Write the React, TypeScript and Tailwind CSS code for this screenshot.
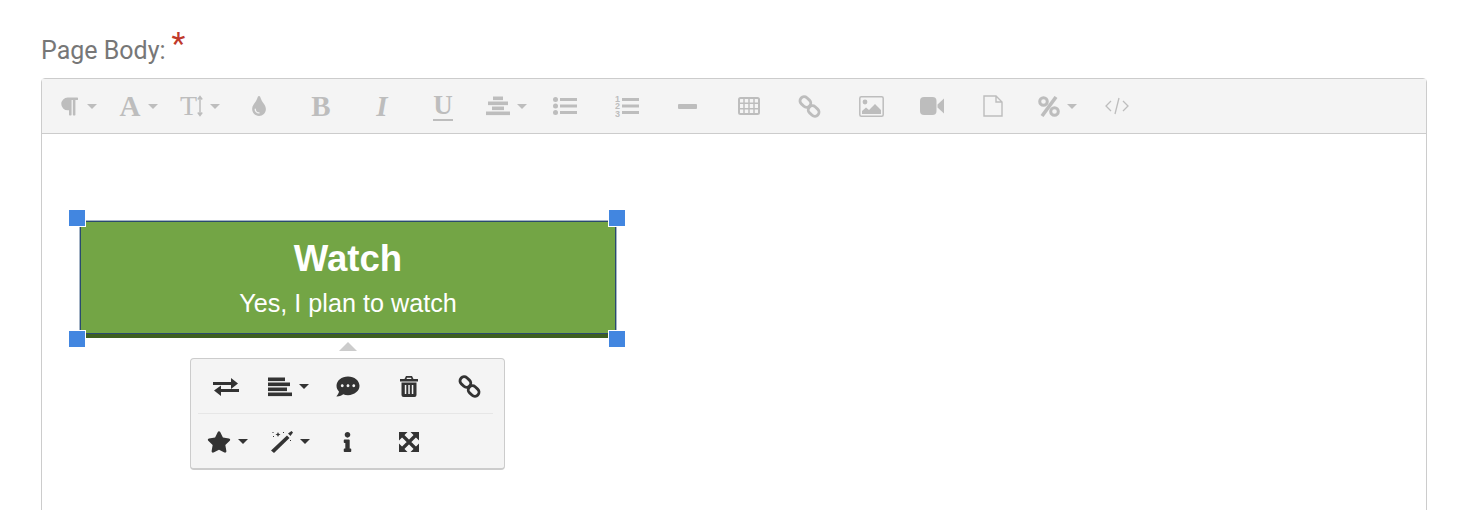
import * as React from 'react';
import { FaCommentDots, FaInfo, FaParagraph, FaStar, FaTint } from 'react-icons/fa';

function Caret({ className }: { className: string }) {
  return <span className={`ml-[7px] h-0 w-0 border-x-[5px] border-t-[5px] border-x-transparent ${className}`} />;
}

function LinkIcon({ className }: { className: string }) {
  return (
    <svg viewBox="0 0 24 24" className={className} fill="none" stroke="currentColor" strokeWidth="3">
      <rect x="1.700" y="3" width="12" height="8.600" rx="4.200" transform="rotate(42 7.700 7.300)" />
      <rect x="10.300" y="12.400" width="12" height="8.600" rx="4.200" transform="rotate(42 16.300 16.700)" />
    </svg>
  );
}

function AlignIcon({ className, center }: { className: string; center?: boolean }) {
  const rows = center
    ? [[7, 10], [2, 20], [6, 12], [0, 24]]
    : [[0, 17], [0, 22], [0, 19], [0, 24]];
  return (
    <svg viewBox="0 0 24 20" className={className} fill="currentColor">
      {rows.map(([x, w], i) => (
        <rect key={i} x={x} y={i * 5 + 0.5} width={w} height="3.6" />
      ))}
    </svg>
  );
}

function ToolbarButton({ children }: { children: React.ReactNode }) {
  return <div className="flex h-full w-[61px] shrink-0 items-center justify-center text-[#bdbdbd]">{children}</div>;
}

function Toolbar() {
  const serif = "font-['Liberation_Serif',serif] font-bold leading-none";
  return (
    <div className="flex h-[55px] items-center border-b border-[#ccc] bg-[#f4f4f4] pl-[5px]">
      <ToolbarButton>
        <FaParagraph className="ml-[1px] h-[21px] w-[18px]" />
        <Caret className="ml-[9px] border-t-[#bdbdbd]" />
      </ToolbarButton>
      <ToolbarButton>
        <span className={`${serif} ml-[1px] text-[29px]`}>A</span>
        <Caret className="ml-[8px] border-t-[#bdbdbd]" />
      </ToolbarButton>
      <ToolbarButton>
        <span className={`${serif} ml-[1px] text-[28px] font-normal`}>T</span>
        <svg viewBox="0 0 6 22" className="h-[22px] w-[6px]" fill="none" stroke="currentColor" strokeWidth="1.5">
          <path d="M3 2v18M.8 4.500 3 1.500l2.200 3M.8 17.500 3 20.500l2.200-3" />
        </svg>
        <Caret className="ml-[2px] border-t-[#bdbdbd]" />
      </ToolbarButton>
      <ToolbarButton>
        <FaTint className="mr-[3px] h-[20px] w-[16px]" />
      </ToolbarButton>
      <ToolbarButton>
        <span className={`${serif} mr-[1px] text-[29px]`}>B</span>
      </ToolbarButton>
      <ToolbarButton>
        <span className={`${serif} mr-[1px] text-[29px] italic`}>I</span>
      </ToolbarButton>
      <ToolbarButton>
        <span className={`${serif} mr-[1px] border-b-2 border-[#bdbdbd] text-[27px]`}>U</span>
      </ToolbarButton>
      <ToolbarButton>
        <AlignIcon center className="ml-[3px] h-[20px] w-[24px]" />
        <Caret className="ml-[5px] border-t-[#bdbdbd]" />
      </ToolbarButton>
      <ToolbarButton>
        <svg viewBox="0 0 24 18" className="mr-[1px] h-[18px] w-[24px]" fill="currentColor">
          <circle cx="2.500" cy="2.500" r="2.500" />
          <circle cx="2.500" cy="9" r="2.500" />
          <circle cx="2.500" cy="15.500" r="2.500" />
          <rect x="7" y="1" width="17" height="3" />
          <rect x="7" y="7.500" width="17" height="3" />
          <rect x="7" y="14" width="17" height="3" />
        </svg>
      </ToolbarButton>
      <ToolbarButton>
        <svg viewBox="0 0 24 22" className="h-[22px] w-[24px]" fill="currentColor">
          <text x="0" y="6.500" fontSize="9" fontWeight="700" fontFamily="Liberation Sans, sans-serif">1</text>
          <text x="0" y="14" fontSize="9" fontWeight="700" fontFamily="Liberation Sans, sans-serif">2</text>
          <text x="0" y="21.500" fontSize="9" fontWeight="700" fontFamily="Liberation Sans, sans-serif">3</text>
          <rect x="7" y="3" width="17" height="3" />
          <rect x="7" y="9.500" width="17" height="3" />
          <rect x="7" y="16" width="17" height="3" />
        </svg>
      </ToolbarButton>
      <ToolbarButton>
        <span className="h-[5px] w-[19px] rounded-[1px] bg-[#bdbdbd]" />
      </ToolbarButton>
      <ToolbarButton>
        <svg viewBox="0 0 22 18" className="h-[18px] w-[22px]" fill="none" stroke="currentColor">
          <rect x="1" y="1" width="20" height="16" rx="1.500" strokeWidth="2" />
          <path d="M1 6.300h20M1 11.700h20M6 1v16M11 1v16M16 1v16" strokeWidth="1.500" />
        </svg>
      </ToolbarButton>
      <ToolbarButton>
        <LinkIcon className="h-[23px] w-[23px]" />
      </ToolbarButton>
      <ToolbarButton>
        <svg viewBox="0 0 25 21" className="ml-[2px] h-[21px] w-[25px]" fill="none" stroke="currentColor" strokeWidth="1.500">
          <rect x="0.800" y="0.800" width="23.400" height="19.400" rx="1.500" />
          <circle cx="6" cy="6" r="2.400" fill="currentColor" stroke="none" />
          <path d="M3 18v-3l4-3.500 3 2.500 6-6 6 6v4z" fill="currentColor" stroke="none" />
        </svg>
      </ToolbarButton>
      <ToolbarButton>
        <svg viewBox="0 0 24 18" className="h-[18px] w-[24px]" fill="currentColor">
          <rect x="0" y="0" width="16.500" height="18" rx="4" />
          <path d="M17.500 7.500 24 1.500v15l-6.500-6z" />
        </svg>
      </ToolbarButton>
      <ToolbarButton>
        <svg viewBox="0 0 20 22" className="h-[22px] w-[20px]" fill="none" stroke="currentColor" strokeWidth="1.400">
          <path d="M1 1h12l6 6v14H1zM13 1v6h6" />
        </svg>
      </ToolbarButton>
      <div className="flex h-full w-[63px] shrink-0 items-center justify-center pl-[6px] text-[#bdbdbd]">
        <svg viewBox="0 0 22 21" className="h-[21px] w-[22px]" fill="none" stroke="currentColor" strokeWidth="3">
          <circle cx="5.500" cy="5.500" r="3.800" />
          <circle cx="16.500" cy="15.500" r="3.800" />
          <path d="M18 1 4 20" strokeWidth="3.600" />
        </svg>
        <Caret className="border-t-[#bdbdbd]" />
      </div>
      <ToolbarButton>
        <svg viewBox="0 0 24 18" className="h-[18px] w-[24px]" fill="none" stroke="currentColor" strokeWidth="1.300">
          <path d="M6 4 1 9l5 5M18 4l5 5-5 5M14 1l-4 16" />
        </svg>
      </ToolbarButton>
    </div>
  );
}

function PopupButton({ children }: { children: React.ReactNode }) {
  return <div className="flex h-[55px] w-[61px] shrink-0 items-center justify-center text-[#333]">{children}</div>;
}

function ImagePopup() {
  return (
    <div className="absolute left-[111px] top-[122px] w-[315px]">
      <div className="mb-[7px] ml-[149px] h-0 w-0 border-x-[9px] border-b-[9px] border-x-transparent border-b-[#ccc]" />
      <div className="h-[112px] rounded-[4px] border border-b-2 border-[#ccc] bg-[#f4f4f4] pl-[4px]">
        <div className="flex h-[54px]">
          <PopupButton>
            <svg viewBox="0 0 26 18" className="h-[18px] w-[26px]" fill="currentColor">
              <path d="M0 4h18V0l7 5.500-7 5.500V7H0zM26 11H8V7.500L1 12.500 8 18v-4h18z" />
            </svg>
          </PopupButton>
          <PopupButton>
            <AlignIcon className="ml-[3px] h-[20px] w-[24px]" />
            <Caret className="border-t-[#333]" />
          </PopupButton>
          <PopupButton>
            <FaCommentDots className="h-[23px] w-[24px]" />
          </PopupButton>
          <PopupButton>
            <svg viewBox="0 0 18 21" className="h-[21px] w-[18px]" fill="currentColor" fillRule="evenodd">
              <path d="M6 0h6l1.500 3H18v2.500H0V3h4.500zM7 1.800 6.500 3h5L11 1.800z" />
              <path d="M1.500 6.500h15V19a2 2 0 0 1-2 2h-11a2 2 0 0 1-2-2zM4.800 9v9h1.500V9zM8.300 9v9h1.500V9zM11.800 9v9h1.500V9z" />
            </svg>
          </PopupButton>
          <PopupButton>
            <LinkIcon className="h-[23px] w-[23px]" />
          </PopupButton>
        </div>
        <div className="ml-[3px] mr-[11px] border-t border-[#e6e6e6]" />
        <div className="flex h-[55px]">
          <PopupButton>
            <FaStar className="ml-[3px] h-[22px] w-[24px]" />
            <Caret className="ml-[5px] border-t-[#333]" />
          </PopupButton>
          <PopupButton>
            <svg viewBox="0 0 22 22" className="ml-[7px] h-[22px] w-[22px] shrink-0" fill="currentColor">
              <path d="M16 4.500 18.500 7 3 22 0 19.500z" />
              <path d="M17 2.500 20.500 0 22 1.500 19.500 5z" />
              <path d="M7 1l.8 1.700L9.500 3.500l-1.700.8L7 6l-.8-1.700L4.500 3.500l1.700-.8zM1.500 1h1v1h-1zM12 1h1v1h-1zM19 9h1v1h-1zM2 5h1v1H2z" />
            </svg>
            <Caret className="border-t-[#333]" />
          </PopupButton>
          <PopupButton>
            <FaInfo className="h-[20px] w-[9px]" />
          </PopupButton>
          <PopupButton>
            <svg viewBox="0 0 20 20" className="h-[20px] w-[20px]" fill="currentColor">
              <path d="M0 0h8.500L0 8.500zM20 0v8.500L11.500 0zM0 20v-8.500L8.500 20zM20 20h-8.500l8.500-8.500z" />
              <path d="M3.500 3.500l13 13M16.500 3.500l-13 13" fill="none" stroke="currentColor" strokeWidth="3.200" />
            </svg>
          </PopupButton>
        </div>
      </div>
    </div>
  );
}

function Handle({ className }: { className: string }) {
  return <span className={`absolute h-[18px] w-[18px] border border-white bg-[#4286e0] ${className}`} />;
}

export default function App() {
  return (
    <div className="h-[510px] overflow-hidden bg-white px-[41px] pt-[30px] font-['Liberation_Sans',sans-serif]">
      <div className="flex h-[48px] items-start font-['Roboto',sans-serif] text-[25px] leading-[42px] text-[#777]">
        Page Body:
        <span className="-mt-[3px] ml-[6px] text-[32px] leading-[32px] text-[#c0392b]">*</span>
      </div>
      <div className="h-[460px] w-[1386px] rounded-t-[4px] border border-[#ccc]">
        <Toolbar />
        <div className="pl-[37px] pt-[86px]">
          <div className="relative w-[538px]">
            <div className="h-[118px] border-x border-t border-[#a5b4c6]">
              <div className="flex h-[117px] flex-col border-x border-t border-[#2a4a6e]">
                <div className="flex flex-1 flex-col items-center border-b border-[#2a4a6e] bg-[#73a545] pt-[14px] text-white">
                  <span className="text-[36.6px] font-bold leading-[46px]">Watch</span>
                  <span className="text-[25.2px] leading-[43px]">Yes, I plan to watch</span>
                </div>
                <div className="h-[4px] bg-[#3d5f20]" />
              </div>
            </div>
            <Handle className="left-[-11px] top-[-11px]" />
            <Handle className="right-[-9px] top-[-11px]" />
            <Handle className="bottom-[-10px] left-[-11px]" />
            <Handle className="bottom-[-10px] right-[-9px]" />
            <ImagePopup />
          </div>
        </div>
      </div>
    </div>
  );
}
